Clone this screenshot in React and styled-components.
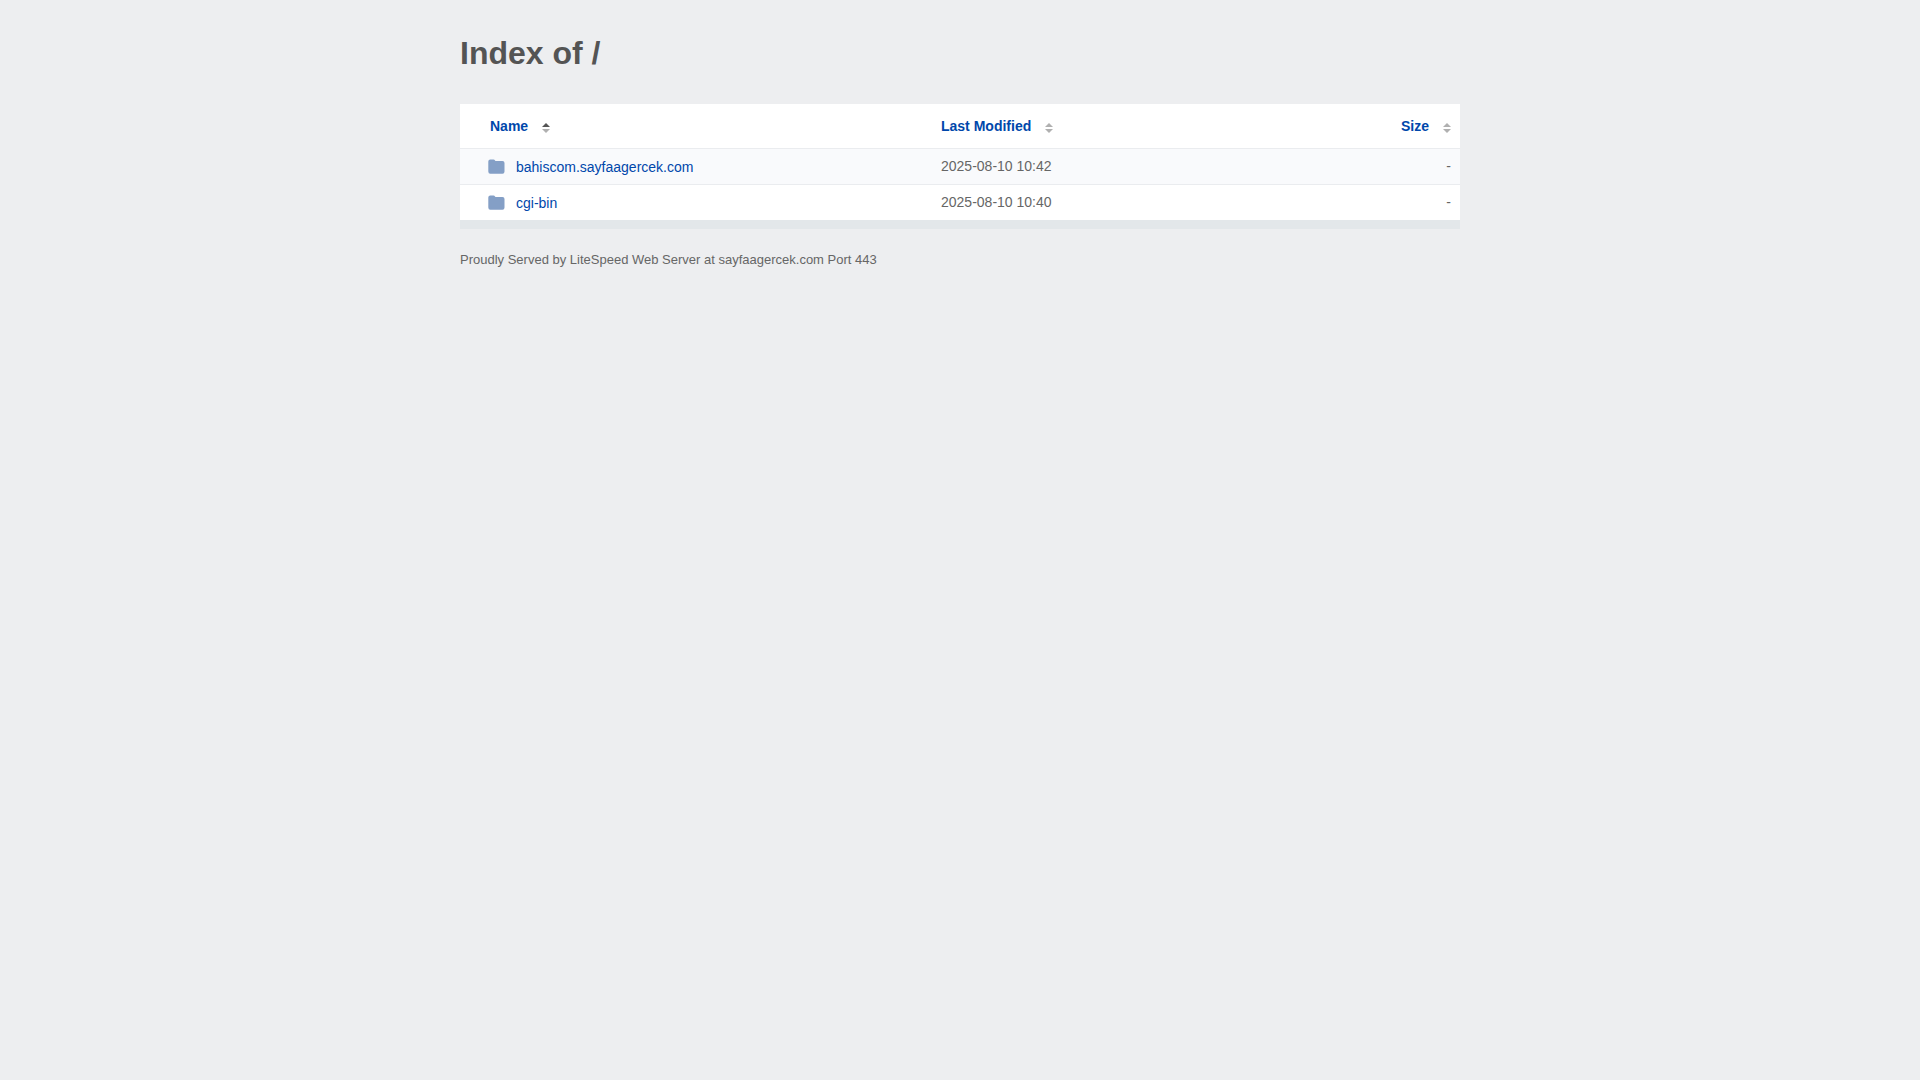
import React from 'react'
import styled, { createGlobalStyle } from 'styled-components'

const GlobalStyle = createGlobalStyle`
  *, *::before, *::after {
    box-sizing: border-box;
  }

  body {
    margin: 0;
    background: #edeef0;
    color: #666;
    font-family: "Liberation Sans", Arial, sans-serif;
    font-size: 14px;
    line-height: 20px;
  }
`;

const Page = styled.main`
  max-width: 1040px;
  margin: 0 auto;
  padding: 32px 20px;
`;

const Title = styled.h1`
  margin: 0 0 30px;
  color: #545454;
  font-size: 32px;
  line-height: 42px;
`;

const FileTable = styled.table`
  width: 100%;
  table-layout: fixed;
  border-collapse: separate;
  border-spacing: 0;
  background: #fff;
  border-bottom: 9px solid #e3e7ea;
`;

const HeadCell = styled.th`
  width: ${props => props.$width};
  padding: 12px 9px 12px ${props => props.$indent || '9px'};
  text-align: ${props => props.$align || 'left'};
`;

const SortButton = styled.button`
  display: inline-flex;
  align-items: center;
  gap: 14px;
  padding: 0;
  border: 0;
  background: none;
  color: #0047ab;
  font: inherit;
  font-weight: bold;
  vertical-align: top;
  cursor: pointer;
`;

const SortIcon = styled.svg`
  width: 8px;
  height: 10px;
  margin-top: 4px;
`;

const Row = styled.tr`
  background: ${props => props.$striped ? '#f9fafc' : '#fff'};
`;

const Cell = styled.td`
  padding: 7px 9px 8px ${props => props.$indent || '9px'};
  border-top: 1px solid #eaecef;
  text-align: ${props => props.$align || 'left'};
`;

const FileLink = styled.a`
  display: flex;
  align-items: center;
  gap: 10px;
  padding-top: 1px;
  margin-bottom: -1px;
  color: #0047ab;
  text-decoration: none;

  &:hover {
    text-decoration: underline;
  }
`;

const FolderIcon = styled.svg`
  width: 18px;
  height: 16px;
`;

const Footer = styled.footer`
  padding-top: 21px;
  font-size: 13px;
`;

const files = [
  { name: 'bahiscom.sayfaagercek.com', modified: '2025-08-10 10:42', size: '-' },
  { name: 'cgi-bin', modified: '2025-08-10 10:40', size: '-' },
]

function SortHeader({ children, sorted }) {
  return (
    <SortButton type="button">
      {children}
      <SortIcon viewBox="0 0 8 10" aria-hidden="true">
        <path d="M0 4L4 0L8 4Z" fill={sorted ? '#555' : '#b0b0b0'} />
        <path d="M0 6L4 10L8 6Z" fill="#b0b0b0" />
      </SortIcon>
    </SortButton>
  )
}

function Folder() {
  return (
    <FolderIcon viewBox="0 0 18 16" aria-hidden="true">
      <path
        d="M.3 2.500Q.3 .5 2.300 .5H5.500Q6.500 .5 7 1.500L7.500 2H14.500Q16.500 2 16.500 4V12.500Q16.500 14.700 14.500 14.700H2.300Q.3 14.700 .3 12.500Z"
        fill="#849fc6"
      />
    </FolderIcon>
  )
}

export default function App() {
  return (
    <>
      <GlobalStyle />
      <Page>
        <Title>Index of /</Title>
        <FileTable>
          <thead>
            <tr>
              <HeadCell $width="47.2%" $indent="30px" aria-sort="ascending">
                <SortHeader sorted>Name</SortHeader>
              </HeadCell>
              <HeadCell $width="30%">
                <SortHeader>Last Modified</SortHeader>
              </HeadCell>
              <HeadCell $align="right">
                <SortHeader>Size</SortHeader>
              </HeadCell>
            </tr>
          </thead>
          <tbody>
            {files.map((file, i) => (
              <Row key={file.name} $striped={i % 2 === 0}>
                <Cell $indent="28px">
                  <FileLink href={`/${file.name}/`}>
                    <Folder />
                    {file.name}
                  </FileLink>
                </Cell>
                <Cell>{file.modified}</Cell>
                <Cell $align="right">{file.size}</Cell>
              </Row>
            ))}
          </tbody>
        </FileTable>
        <Footer>Proudly Served by LiteSpeed Web Server at sayfaagercek.com Port 443</Footer>
      </Page>
    </>
  )
}
